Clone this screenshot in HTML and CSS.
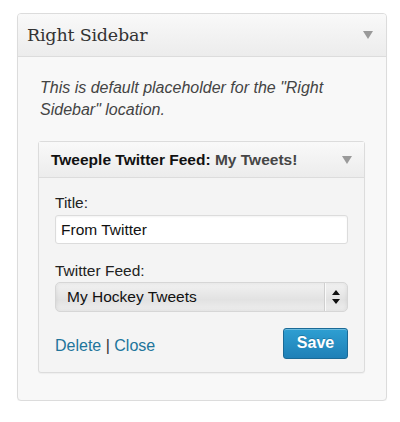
FILE: index.html
```html
<!DOCTYPE html>
<html>
<head>
<meta charset="utf-8">
<link rel="stylesheet" href="styles.css">
</head>
<body>
<div class="sidebar">
  <div class="sidebar-head">
    <h3 class="sidebar-title">Right Sidebar</h3>
    <span class="arrow"></span>
  </div>
  <div class="sidebar-body">
    <p class="desc">This is default placeholder for the "Right Sidebar" location.</p>
    <div class="widget">
      <div class="widget-head">
        <span class="widget-title">Tweeple Twitter Feed: <span class="widget-sub">My Tweets!</span></span>
        <span class="arrow"></span>
      </div>
      <div class="widget-body">
        <label class="field-label">Title:</label>
        <div class="text-input">From Twitter</div>
        <label class="field-label feed-label">Twitter Feed:</label>
        <div class="select">
          <span class="select-value">My Hockey Tweets</span>
          <span class="select-btn">
            <svg width="8" height="14" viewBox="0 0 8 14"><path d="M4 0 L8 5 L0 5 Z M0 9 L8 9 L4 14 Z" fill="#111"/></svg>
          </span>
        </div>
        <div class="actions">
          <div class="links"><a class="link">Delete</a> <span class="sep">|</span> <a class="link">Close</a></div>
          <button class="save">Save</button>
        </div>
      </div>
    </div>
  </div>
</div>
</body>
</html>
```
FILE: styles.css
```css
* { box-sizing: border-box; }
html, body { margin: 0; padding: 0; background: #fff; }
body { font-family: "Liberation Sans", Arial, sans-serif; color: #222; }

.sidebar {
  margin: 13px 0 0 17px;
  width: 370px;
  height: 388px;
  border: 1px solid #dcdcdc;
  border-radius: 4px;
  background: #f8f8f8;
  box-shadow: 0 1px 1px rgba(0,0,0,0.04);
  overflow: hidden;
}
.sidebar-head {
  height: 43px;
  display: flex;
  align-items: center;
  justify-content: space-between;
  padding: 0 13px 0 9px;
  background: linear-gradient(#f9f9f9, #ececec);
  border-bottom: 1px solid #dcdcdc;
}
.sidebar-title {
  margin: 0;
  font-family: "DejaVu Serif", Georgia, serif;
  font-weight: normal;
  font-size: 17.5px;
  letter-spacing: -0.2px;
  color: #333;
}
.arrow {
  width: 0; height: 0;
  border-left: 5px solid transparent;
  border-right: 5px solid transparent;
  border-top: 8px solid #9a9a9a;
}
.sidebar-body {
  padding: 20px 21px 0 20px;
}
.desc {
  margin: 0 0 20px 2px;
  font-style: italic;
  font-size: 16px;
  line-height: 22px;
  color: #444;
}
.widget {
  border: 1px solid #dcdcdc;
  border-radius: 3px;
  background: #f4f4f4;
  box-shadow: 0 1px 1px rgba(0,0,0,0.04);
}
.widget-head {
  height: 36px;
  display: flex;
  align-items: center;
  justify-content: space-between;
  padding: 0 12px 0 12px;
  background: linear-gradient(#f9f9f9, #ececec);
  border-bottom: 1px solid #dcdcdc;
}
.widget-title {
  font-weight: bold;
  font-size: 15.5px;
  color: #111;
}
.widget-sub { color: #464646; }
.widget-body {
  padding: 16px 16px 13px 16px;
}
.field-label {
  display: block;
  font-size: 15.5px;
  line-height: 18px;
  color: #222;
  margin-bottom: 3px;
}
.feed-label { margin-top: 18px; margin-bottom: 2px; }
.text-input {
  height: 29px;
  border: 1px solid #dcdcdc;
  border-radius: 3px;
  background: #fff;
  font-size: 15.5px;
  line-height: 27px;
  padding: 0 5px;
  color: #111;
  box-shadow: inset 0 1px 2px rgba(0,0,0,0.05);
}
.select {
  height: 30px;
  display: flex;
  border: 1px solid #d6d6d6;
  border-radius: 5px;
  background: linear-gradient(#f2f2f2, #e2e2e2 60%, #eeeeee);
  box-shadow: inset 0 0 4px rgba(0,0,0,0.08);
}
.select-value {
  flex: 1;
  padding-left: 11px;
  font-size: 15.5px;
  line-height: 28px;
  color: #111;
}
.select-btn {
  width: 23px;
  border-left: 1px solid #cfcfcf;
  box-shadow: inset 1px 0 0 #fafafa;
  display: flex;
  align-items: center;
  justify-content: center;
}
.actions {
  margin-top: 16px;
  display: flex;
  align-items: center;
  justify-content: space-between;
}
.links {
  font-size: 16px;
  padding-top: 4px;
}
.link { color: #21759b; text-decoration: none; }
.sep { color: #333; }
.save {
  width: 65px;
  height: 31px;
  border: 1px solid #1b6a96;
  border-radius: 3px;
  background: linear-gradient(#2e9fd2, #1f80b7);
  color: #fff;
  font-family: "Liberation Sans", Arial, sans-serif;
  font-weight: bold;
  font-size: 16px;
  padding: 0 0 2px;
  box-shadow: inset 0 1px 0 rgba(255,255,255,0.3);
  text-shadow: 0 -1px 0 rgba(0,0,0,0.2);
}
```
